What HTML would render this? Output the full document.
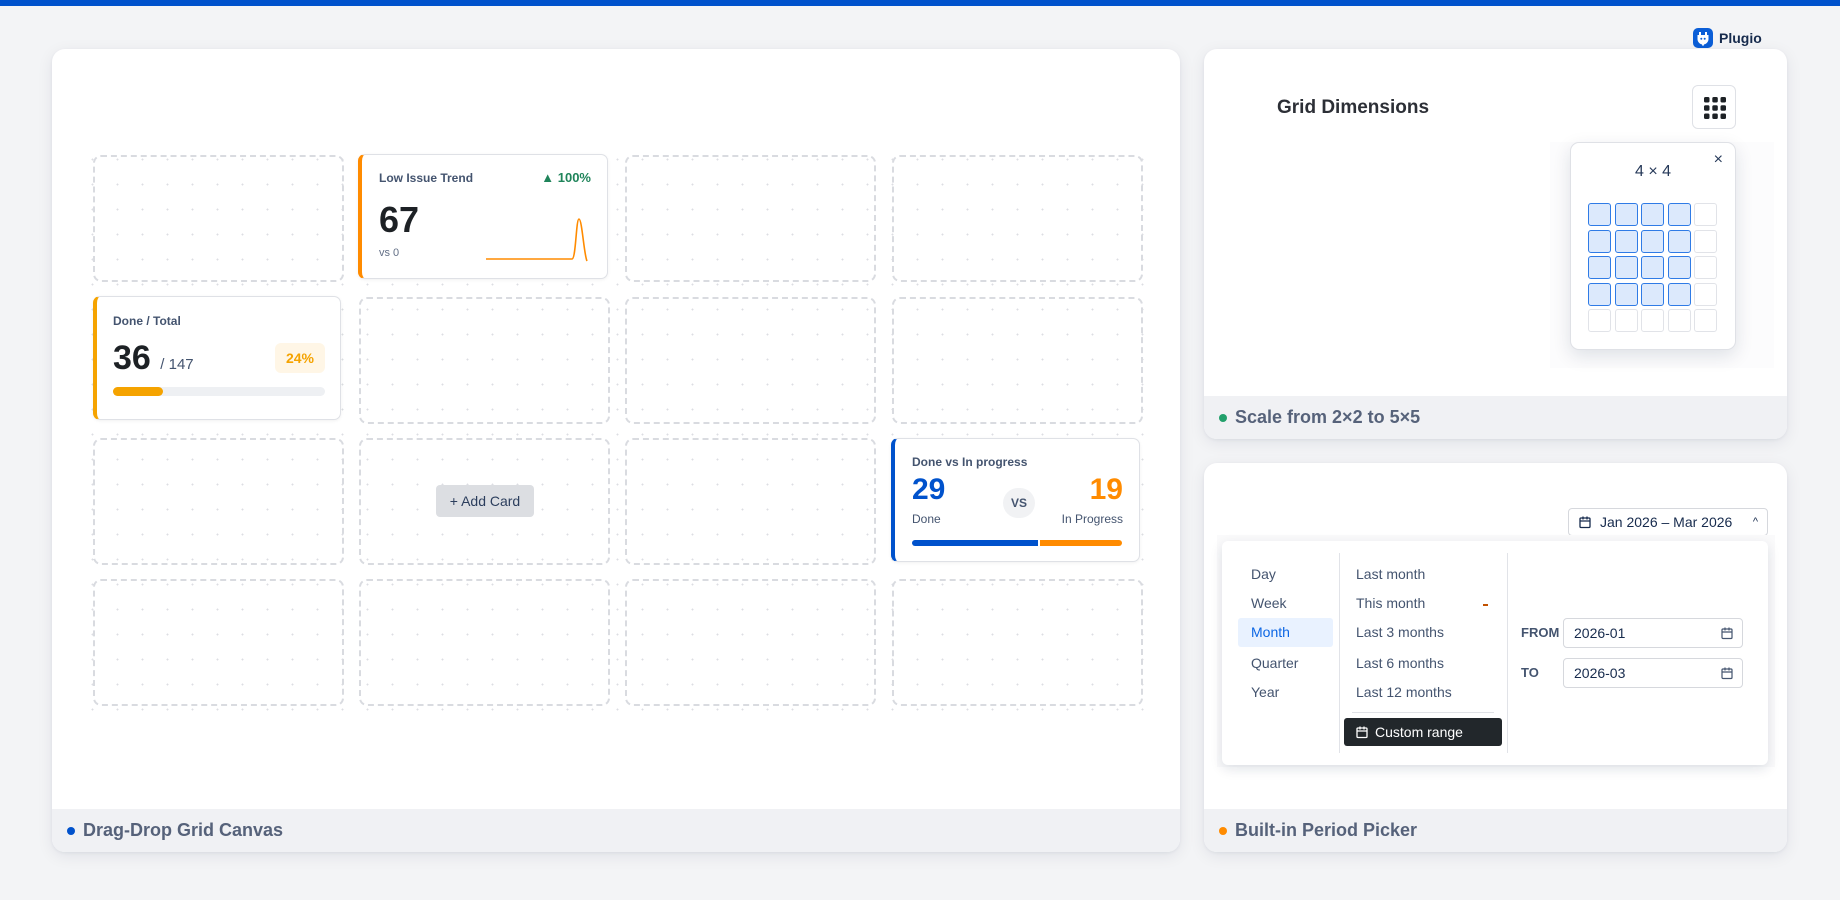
<!DOCTYPE html>
<html><head><meta charset="utf-8"><style>
*{box-sizing:border-box;margin:0;padding:0}
body{width:1840px;height:900px;background:#f3f4f6;font-family:"Liberation Sans",sans-serif;position:relative;overflow:hidden;color:#172b4d}
.abs{position:absolute}
.topbar{left:0;top:0;width:1840px;height:6px;background:#0052cc}
.card{position:absolute;background:#fff;border-radius:13px;box-shadow:0 4px 16px rgba(9,30,66,.08),0 1px 3px rgba(9,30,66,.06);overflow:hidden}
.foot{position:absolute;left:0;right:0;bottom:0;height:43px;background:#f0f1f4;font-weight:700;font-size:18px;color:#56627a;padding-left:31px;line-height:43px}
.foot .d{position:absolute;left:15px;top:18px;width:8px;height:8px;border-radius:50%}
.dots{left:80px;top:147px;width:1076px;height:570px;background-image:radial-gradient(circle,#dcdee3 0.8px,transparent 1.1px);background-size:25px 25px;background-position:0 0}
.cell{position:absolute;width:251px;height:127px;border:2px dashed #d9dbe0;border-radius:8px}
.w{position:absolute;background:#fff;border:1px solid #dfe1e6;border-radius:7px;box-shadow:0 1px 3px rgba(0,0,0,.06);overflow:hidden}
.lt{font-size:12px;font-weight:700;color:#44546f;position:absolute}
.it{position:absolute;font-size:14px;color:#44546f}
.gc{position:absolute;width:23px;height:23px;border-radius:3px;border:1.5px solid #e1e3e8;background:#fff}
.gc.on{background:#dce9fc;border-color:#2f7be6}
.inp{position:absolute;width:180px;height:30px;border:1px solid #d6d8dd;border-radius:4px;font-size:14px;color:#172b4d;padding-left:10px;line-height:28px}
</style></head><body>
<div class="abs topbar"></div>

<div class="abs" style="left:1693px;top:28px;width:20px;height:20px;border-radius:5px;background:#0b5ed7">
<svg width="20" height="20" viewBox="0 0 20 20"><path d="M7 4v4M13 4v4M5.5 8h9v3a4.5 4.5 0 0 1-9 0z M10 15.5v2" stroke="#fff" stroke-width="2" fill="#fff"/><circle cx="8.3" cy="10.8" r="1" fill="#0b5ed7"/><circle cx="11.7" cy="10.8" r="1" fill="#0b5ed7"/></svg></div>
<div class="abs" style="left:1719px;top:30px;font-size:14px;font-weight:700;color:#172b4d">Plugio</div>

<div class="card" style="left:52px;top:49px;width:1128px;height:803px">
<div class="foot"><span class="d" style="background:#0052cc"></span>Drag-Drop Grid Canvas</div>
</div>
<div class="abs dots"></div>
<div class="cell" style="left:93px;top:155px"></div>
<div class="cell" style="left:625px;top:155px"></div>
<div class="cell" style="left:892px;top:155px"></div>
<div class="cell" style="left:359px;top:297px"></div>
<div class="cell" style="left:625px;top:297px"></div>
<div class="cell" style="left:892px;top:297px"></div>
<div class="cell" style="left:93px;top:438px"></div>
<div class="cell" style="left:359px;top:438px"></div>
<div class="cell" style="left:625px;top:438px"></div>
<div class="cell" style="left:93px;top:579px"></div>
<div class="cell" style="left:359px;top:579px"></div>
<div class="cell" style="left:625px;top:579px"></div>
<div class="cell" style="left:892px;top:579px"></div>

<div class="w" style="left:358px;top:154px;width:250px;height:125px;border-left:4px solid #ff8b00">
<div class="lt" style="left:17px;top:16px">Low Issue Trend</div>
<div class="abs" style="right:16px;top:15px;font-size:13px;font-weight:700;color:#1f845a">▲ 100%</div>
<div class="abs" style="left:17px;top:44px;font-size:36px;font-weight:700;color:#1d2125">67</div>
<div class="abs" style="left:17px;top:92px;font-size:11px;color:#626f86">vs 0</div>
<svg class="abs" style="left:122px;top:60px" width="110" height="50" viewBox="0 0 110 50"><path d="M2 44 H88 C92 44 92 4 95 4 C98 4 100 40 103 46" fill="none" stroke="#ff8b00" stroke-width="1.6"/></svg>
</div>

<div class="w" style="left:93px;top:296px;width:248px;height:124px;border-left:4px solid #f5a300">
<div class="lt" style="left:16px;top:17px">Done / Total</div>
<div class="abs" style="left:16px;top:42px;font-size:34px;font-weight:700;color:#1d2125">36 <span style="font-size:15px;font-weight:400;color:#44546f">/ 147</span></div>
<div class="abs" style="left:178px;top:46px;width:50px;height:30px;border-radius:6px;background:#fff6e6;color:#f5a300;font-size:14px;font-weight:700;text-align:center;line-height:30px">24%</div>
<div class="abs" style="left:16px;top:90px;width:212px;height:9px;border-radius:5px;background:#eef0f3"><div style="width:50px;height:9px;border-radius:5px;background:#f5a300"></div></div>
</div>

<div class="abs" style="left:436px;top:485px;width:98px;height:32px;border-radius:4px;background:#dcdee2;font-size:14px;color:#2c3e5d;text-align:center;line-height:32px">+ Add Card</div>

<div class="w" style="left:891px;top:438px;width:249px;height:124px;border-left:4px solid #0052cc">
<div class="lt" style="left:17px;top:16px">Done vs In progress</div>
<div class="abs" style="left:17px;top:34px;font-size:30px;font-weight:700;color:#0052cc">29</div>
<div class="abs" style="left:17px;top:73px;font-size:12px;color:#44546f">Done</div>
<div class="abs" style="left:108px;top:49px;width:32px;height:30px;border-radius:15px;background:#f1f2f4;font-size:12px;font-weight:700;color:#44546f;text-align:center;line-height:30px">VS</div>
<div class="abs" style="right:16px;top:34px;font-size:30px;font-weight:700;color:#ff8b00">19</div>
<div class="abs" style="right:16px;top:73px;font-size:12px;color:#44546f">In Progress</div>
<div class="abs" style="left:17px;top:101px;width:126px;height:6px;border-radius:3px 0 0 3px;background:#0052cc"></div>
<div class="abs" style="left:145px;top:101px;width:82px;height:6px;border-radius:0 3px 3px 0;background:#ff8b00"></div>
</div>

<div class="card" style="left:1204px;top:49px;width:583px;height:390px">
<div class="abs" style="left:73px;top:48px;font-size:19px;font-weight:700;color:#2c2f36">Grid Dimensions</div>
<div class="abs" style="left:488px;top:36px;width:44px;height:44px;border:1px solid #dfe1e6;border-radius:6px;background:#fff">
<svg width="44" height="44" viewBox="0 0 44 44" fill="#1d2125"><g><rect x="11" y="11" width="5.5" height="5.5" rx="1.5"/><rect x="19.3" y="11" width="5.5" height="5.5" rx="1.5"/><rect x="27.5" y="11" width="5.5" height="5.5" rx="1.5"/><rect x="11" y="19.3" width="5.5" height="5.5" rx="1.5"/><rect x="19.3" y="19.3" width="5.5" height="5.5" rx="1.5"/><rect x="27.5" y="19.3" width="5.5" height="5.5" rx="1.5"/><rect x="11" y="27.5" width="5.5" height="5.5" rx="1.5"/><rect x="19.3" y="27.5" width="5.5" height="5.5" rx="1.5"/><rect x="27.5" y="27.5" width="5.5" height="5.5" rx="1.5"/></g></svg></div>
<div class="abs" style="left:346px;top:93px;width:224px;height:226px;background:#fcfcfd"></div>
<div class="abs" style="left:366px;top:93px;width:166px;height:208px;border:1px solid #dfe1e6;border-radius:9px;background:#fff;box-shadow:0 6px 18px rgba(9,30,66,.12)">
<div class="abs" style="left:0;right:0;top:20px;text-align:center;font-size:16px;color:#253858">4 × 4</div>
<div class="abs" style="right:12px;top:8px;font-size:16px;color:#253858">×</div>
</div>
<div class="abs" style="left:384px;top:154px;width:140px;height:140px">
<div class="gc on" style="left:0;top:0"></div><div class="gc on" style="left:26.5px;top:0"></div><div class="gc on" style="left:53px;top:0"></div><div class="gc on" style="left:79.5px;top:0"></div><div class="gc" style="left:106px;top:0"></div>
<div class="gc on" style="left:0;top:26.5px"></div><div class="gc on" style="left:26.5px;top:26.5px"></div><div class="gc on" style="left:53px;top:26.5px"></div><div class="gc on" style="left:79.5px;top:26.5px"></div><div class="gc" style="left:106px;top:26.5px"></div>
<div class="gc on" style="left:0;top:53px"></div><div class="gc on" style="left:26.5px;top:53px"></div><div class="gc on" style="left:53px;top:53px"></div><div class="gc on" style="left:79.5px;top:53px"></div><div class="gc" style="left:106px;top:53px"></div>
<div class="gc on" style="left:0;top:79.5px"></div><div class="gc on" style="left:26.5px;top:79.5px"></div><div class="gc on" style="left:53px;top:79.5px"></div><div class="gc on" style="left:79.5px;top:79.5px"></div><div class="gc" style="left:106px;top:79.5px"></div>
<div class="gc" style="left:0;top:106px"></div><div class="gc" style="left:26.5px;top:106px"></div><div class="gc" style="left:53px;top:106px"></div><div class="gc" style="left:79.5px;top:106px"></div><div class="gc" style="left:106px;top:106px"></div>
</div>
<div class="foot"><span class="d" style="background:#22a06b"></span>Scale from 2×2 to 5×5</div>
</div>

<div class="card" style="left:1204px;top:463px;width:583px;height:389px">
<div class="abs" style="left:364px;top:45px;width:200px;height:28px;border:1px solid #d6d8dd;border-radius:4px;font-size:14px;color:#172b4d;line-height:26px;padding-left:31px">Jan 2026 – Mar 2026
<svg class="abs" style="left:9px;top:6px" width="14" height="14" viewBox="0 0 14 14" fill="none" stroke="#172b4d" stroke-width="1.3"><rect x="2" y="3" width="10" height="9.5" rx="1"/><path d="M2 6h10M5 1.5v3M9 1.5v3"/></svg>
<span class="abs" style="right:9px;top:0;font-size:11px">^</span></div>
<div class="abs" style="left:13px;top:72px;width:558px;height:232px;background:#fafafb"></div>
<div class="abs" style="left:18px;top:78px;width:546px;height:224px;background:#fff;border-radius:6px;box-shadow:0 4px 12px rgba(9,30,66,.12)"></div>
<div class="abs" style="left:34px;top:155px;width:95px;height:29px;border-radius:3px;background:#e9f2ff"></div>
<div class="it" style="left:47px;top:103px">Day</div>
<div class="it" style="left:47px;top:132px">Week</div>
<div class="it" style="left:47px;top:161px;color:#0c66e4">Month</div>
<div class="it" style="left:47px;top:192px">Quarter</div>
<div class="it" style="left:47px;top:221px">Year</div>
<div class="abs" style="left:135px;top:90px;width:1px;height:200px;background:#e1e3e8"></div>
<div class="it" style="left:152px;top:103px">Last month</div>
<div class="it" style="left:152px;top:132px">This month</div>
<div class="abs" style="left:279px;top:141px;width:5px;height:2px;background:#c25100"></div>
<div class="it" style="left:152px;top:161px">Last 3 months</div>
<div class="it" style="left:152px;top:192px">Last 6 months</div>
<div class="it" style="left:152px;top:221px">Last 12 months</div>
<div class="abs" style="left:148px;top:249px;width:142px;height:1px;background:#dfe1e6"></div>
<div class="abs" style="left:140px;top:255px;width:158px;height:28px;border-radius:3px;background:#22272b;color:#fff;font-size:14px;line-height:28px;padding-left:31px">Custom range
<svg class="abs" style="left:11px;top:7px" width="14" height="14" viewBox="0 0 14 14" fill="none" stroke="#fff" stroke-width="1.3"><rect x="2" y="3" width="10" height="9.5" rx="1"/><path d="M2 6h10M5 1.5v3M9 1.5v3"/></svg></div>
<div class="abs" style="left:303px;top:90px;width:1px;height:200px;background:#e1e3e8"></div>
<div class="abs" style="left:317px;top:162px;font-size:13px;font-weight:700;color:#44546f">FROM</div>
<div class="inp" style="left:359px;top:155px">2026-01
<svg class="abs" style="right:8px;top:7px" width="14" height="14" viewBox="0 0 14 14" fill="none" stroke="#44546f" stroke-width="1.2"><rect x="2" y="3" width="10" height="9.5" rx="1"/><path d="M2 6h10M5 1.5v3M9 1.5v3"/></svg></div>
<div class="abs" style="left:317px;top:202px;font-size:13px;font-weight:700;color:#44546f">TO</div>
<div class="inp" style="left:359px;top:195px">2026-03
<svg class="abs" style="right:8px;top:7px" width="14" height="14" viewBox="0 0 14 14" fill="none" stroke="#44546f" stroke-width="1.2"><rect x="2" y="3" width="10" height="9.5" rx="1"/><path d="M2 6h10M5 1.5v3M9 1.5v3"/></svg></div>
<div class="foot"><span class="d" style="background:#ff8b00"></span>Built-in Period Picker</div>
</div>
</body></html>
